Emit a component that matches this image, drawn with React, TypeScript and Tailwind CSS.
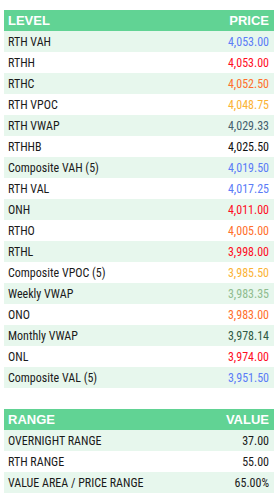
const levels: { name: string; price: string; color: string }[] = [
  { name: 'RTH VAH', price: '4,053.00', color: 'text-[#5b7cf7]' },
  { name: 'RTHH', price: '4,053.00', color: 'text-[#ff0d1f]' },
  { name: 'RTHC', price: '4,052.50', color: 'text-[#ff6f2b]' },
  { name: 'RTH VPOC', price: '4,048.75', color: 'text-[#fbb335]' },
  { name: 'RTH VWAP', price: '4,029.33', color: 'text-[#44606f]' },
  { name: 'RTHHB', price: '4,025.50', color: 'text-[#111111]' },
  { name: 'Composite VAH (5)', price: '4,019.50', color: 'text-[#5b7cf7]' },
  { name: 'RTH VAL', price: '4,017.25', color: 'text-[#5b7cf7]' },
  { name: 'ONH', price: '4,011.00', color: 'text-[#ff0d1f]' },
  { name: 'RTHO', price: '4,005.00', color: 'text-[#ff6f2b]' },
  { name: 'RTHL', price: '3,998.00', color: 'text-[#ff0d1f]' },
  { name: 'Composite VPOC (5)', price: '3,985.50', color: 'text-[#fbb335]' },
  { name: 'Weekly VWAP', price: '3,983.35', color: 'text-[#8fbc8f]' },
  { name: 'ONO', price: '3,983.00', color: 'text-[#ff6f2b]' },
  { name: 'Monthly VWAP', price: '3,978.14', color: 'text-[#2f5a45]' },
  { name: 'ONL', price: '3,974.00', color: 'text-[#ff0d1f]' },
  { name: 'Composite VAL (5)', price: '3,951.50', color: 'text-[#5b7cf7]' },
];

const ranges = [
  { name: 'OVERNIGHT RANGE', value: '37.00' },
  { name: 'RTH RANGE', value: '55.00' },
  { name: 'VALUE AREA / PRICE RANGE', value: '65.00%' },
];

function Header({ left, right }: { left: string; right: string }) {
  return (
    <div className="flex h-[21px] items-center justify-between bg-[#61d394] pl-1 pr-[5px] font-['Liberation_Sans',sans-serif] text-[13px] font-bold text-white">
      <span>{left}</span>
      <span>{right}</span>
    </div>
  );
}

export default function App() {
  return (
    <div className="min-h-screen bg-white px-1 pt-[10px] font-['Roboto_Condensed','Liberation_Serif',serif] text-[12px] text-[#1a1a1a]">
      <Header left="LEVEL" right="PRICE" />
      {levels.map((l, i) => (
        <div
          key={l.name}
          className={`flex h-[21px] items-center justify-between pl-1 pr-[5px] ${i % 2 === 0 ? 'bg-[#e7f7ed]' : 'bg-white'}`}
        >
          <span>{l.name}</span>
          <span className={l.color}>{l.price}</span>
        </div>
      ))}

      <div className="mt-[21px]">
        <Header left="RANGE" right="VALUE" />
        {ranges.map((r, i) => (
          <div
            key={r.name}
            className={`flex h-[21px] items-center justify-between pl-1 pr-[5px] ${i % 2 === 0 ? 'bg-[#e7f7ed]' : 'bg-white'}`}
          >
            <span>{r.name}</span>
            <span>{r.value}</span>
          </div>
        ))}
      </div>
    </div>
  );
}
